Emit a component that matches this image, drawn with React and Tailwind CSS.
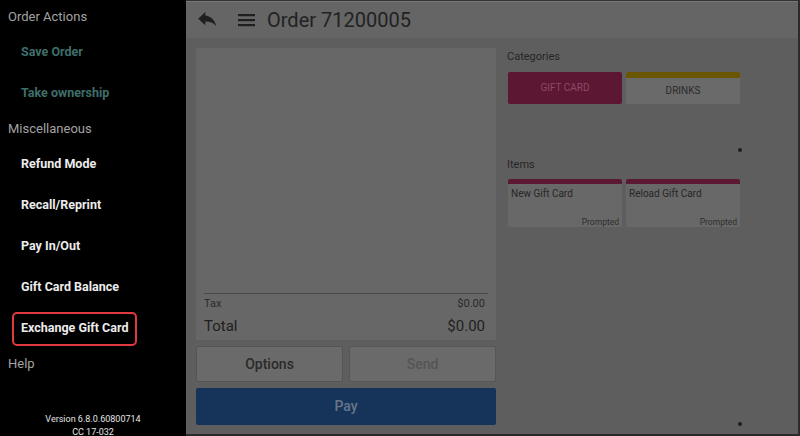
import React from 'react';

const font = { fontFamily: 'Roboto, "Noto Sans", sans-serif' };

function SideItem({ label, tone = 'white', boxed = false }) {
  const color = tone === 'teal' ? 'text-[#3f6f6b]' : 'text-[#ececec]';
  return (
    <div className="h-[41px] flex items-center pl-[21px]">
      {boxed ? (
        <div className="-ml-[9px] h-[34px] px-[7px] flex items-center border-2 border-[#e0393e] rounded-[5px]">
          <span className={`text-[12.5px] font-bold ${color}`}>{label}</span>
        </div>
      ) : (
        <span className={`text-[12.5px] font-bold ${color}`}>{label}</span>
      )}
    </div>
  );
}

function SideHeading({ label }) {
  return (
    <div className="h-[30px] flex items-center pl-[8px] text-[13px] text-[#a3a3a3]">{label}</div>
  );
}

function Tile({ label, bar, body, text }) {
  return (
    <div className={`w-[114px] h-[32px] rounded-[2px] overflow-hidden flex flex-col ${body}`}>
      {bar && <div className={`h-[6px] ${bar}`} />}
      <div className={`flex-1 flex items-center justify-center text-[10px] ${text}`}>{label}</div>
    </div>
  );
}

function ItemTile({ label }) {
  return (
    <div className="w-[114px] h-[48px] rounded-[2px] overflow-hidden flex flex-col bg-[#686868]">
      <div className="h-[5px] bg-[#5c1733]" />
      <div className="flex-1 flex flex-col justify-between px-[3px] pt-[5px] pb-[1px]">
        <span className="text-[10px] text-[#262626] leading-none">{label}</span>
        <span className="self-end text-[8.5px] text-[#2e2e2e] leading-none">Prompted</span>
      </div>
    </div>
  );
}

export default function App() {
  return (
    <div className="w-[800px] h-[436px] flex bg-black overflow-hidden" style={font}>
      <aside className="w-[186px] flex flex-col bg-black pt-[2px]">
        <SideHeading label="Order Actions" />
        <SideItem label="Save Order" tone="teal" />
        <SideItem label="Take ownership" tone="teal" />
        <SideHeading label="Miscellaneous" />
        <SideItem label="Refund Mode" />
        <SideItem label="Recall/Reprint" />
        <SideItem label="Pay In/Out" />
        <SideItem label="Gift Card Balance" />
        <SideItem label="Exchange Gift Card" boxed />
        <SideHeading label="Help" />
        <div className="mt-auto -mb-[3px] text-center text-[9px] leading-[13px] text-[#e4e4e4]">
          <div>Version 6.8.0.60800714</div>
          <div>CC 17-032</div>
        </div>
      </aside>

      <main className="flex-1 flex flex-col bg-[#5e5e5e] border-t border-[#333] border-r-2 border-b-2 border-r-[#2a2a2a] border-b-[#2a2a2a]">
        <header className="h-[37px] flex items-center bg-[#656565] border-t border-[#777] pl-[11px] gap-[19px]">
          <svg width="22" height="16" viewBox="0 0 24 18" className="fill-[#1f1f1f]">
            <path d="M9 4V0L1 7.5 9 15v-4.2c5.5 0 9.3 1.6 12.2 5.2C20 10.6 16.7 5.2 9 4z" />
          </svg>
          <svg width="17" height="14" viewBox="0 0 17 14" className="fill-[#1f1f1f]">
            <rect x="0" y="1" width="17" height="2.2" />
            <rect x="0" y="6" width="17" height="2.2" />
            <rect x="0" y="11" width="17" height="2.2" />
          </svg>
          <span className="-ml-[7px] text-[20px] text-[#222]">Order 71200005</span>
        </header>

        <div className="flex-1 flex gap-[11px] pl-[10px] pt-[10px] pb-[9px]">
          <div className="w-[300px] flex flex-col gap-[6px]">
            <div className="flex-1 bg-[#676767] flex flex-col justify-end px-[8px] pb-[3px]">
              <div className="border-t border-[#4a4a4a] pt-[2px] pr-[3px] flex justify-between text-[11px] text-[#2a2a2a]">
                <span>Tax</span>
                <span>$0.00</span>
              </div>
              <div className="flex justify-between pr-[3px] text-[15px] text-[#1f1f1f] mt-[2px]">
                <span>Total</span>
                <span>$0.00</span>
              </div>
            </div>
            <div className="h-[36px] flex gap-[6px]">
              <div className="flex-1 rounded-[2px] border border-[#555] bg-[#6a6a6a] flex items-center justify-center text-[14px] font-medium text-[#2a2a2a]">Options</div>
              <div className="flex-1 rounded-[2px] border border-[#575757] bg-[#6a6a6a] flex items-center justify-center text-[14px] font-medium text-[#555]">Send</div>
            </div>
            <div className="h-[37px] rounded-[2px] bg-[#163459] flex items-center justify-center text-[14px] font-medium text-[#66768a]">Pay</div>
          </div>

          <div className="flex-1 flex flex-col">
            <div className="text-[11px] text-[#262626] mt-[1px]">Categories</div>
            <div className="flex gap-[4px] mt-[6px] pl-[1px]">
              <Tile label="GIFT CARD" body="bg-[#5c1733]" text="text-[#8c4a66]" />
              <Tile label="DRINKS" bar="bg-[#6b5600]" body="bg-[#6a6a6a]" text="text-[#2a2a2a]" />
            </div>
            <div className="h-[48px] relative">
              <div className="absolute left-[231px] top-[44px] w-[4px] h-[4px] rounded-full bg-[#1e1e1e]" />
            </div>
            <div className="text-[11px] text-[#262626] mt-[5px]">Items</div>
            <div className="flex gap-[4px] mt-[6px] pl-[1px]">
              <ItemTile label="New Gift Card" />
              <ItemTile label="Reload Gift Card" />
            </div>
            <div className="flex-1 relative">
              <div className="absolute left-[231px] bottom-[-1px] w-[4px] h-[4px] rounded-full bg-[#1e1e1e]" />
            </div>
          </div>
        </div>
      </main>
    </div>
  );
}
